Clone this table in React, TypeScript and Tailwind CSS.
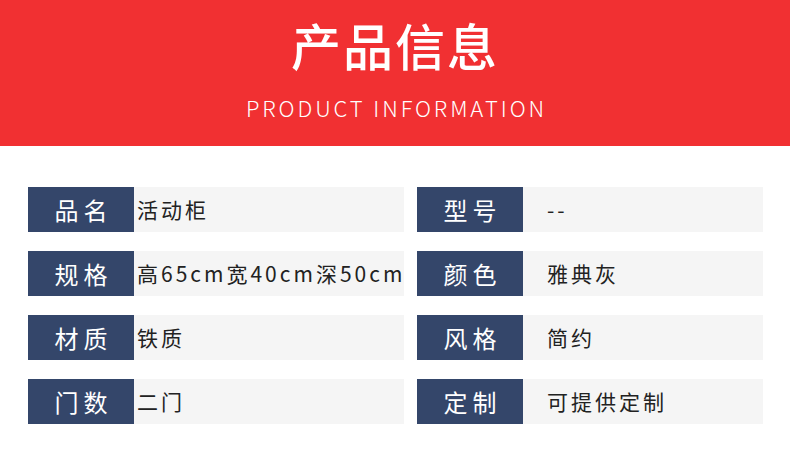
import React from "react";

const rows: [string, string, string, string][] = [
  ["品名", "活动柜", "型号", "--"],
  ["规格", "高65cm宽40cm深50cm", "颜色", "雅典灰"],
  ["材质", "铁质", "风格", "简约"],
  ["门数", "二门", "定制", "可提供定制"],
];

function Cell({ label, value, wide }: { label: string; value: string; wide: boolean }) {
  return (
    <div className={`flex h-[45px] ${wide ? "w-[376px]" : "w-[346px]"}`}>
      <div className="w-[106px] shrink-0 bg-[#34466a] flex items-center justify-center text-white text-[24px] tracking-[5px] pl-[5px]">
        {label}
      </div>
      <div
        className={`flex-1 bg-[#f5f5f5] flex items-center text-[#222] text-[21px] whitespace-nowrap overflow-hidden ${
          wide ? "pl-[3px] tracking-[3px]" : "pl-[24px] tracking-[3px]"
        }`}
      >
        {value}
      </div>
    </div>
  );
}

export default function App() {
  return (
    <div
      className="w-[790px] h-[454px] bg-white overflow-hidden"
      style={{ fontFamily: '"Noto Sans CJK SC", "Noto Sans", sans-serif' }}
    >
      <div className="h-[146px] bg-[#f13032] flex flex-col items-center">
        <div className="mt-[10px] text-white text-[50px] font-medium leading-[68px] tracking-[2px]">
          产品信息
        </div>
        <div className="mt-[14px] pl-[3px] text-white text-[22px] font-light leading-[30px] tracking-[2.9px]">
          PRODUCT INFORMATION
        </div>
      </div>
      <div className="pt-[41px] pl-[28px] flex flex-col gap-[19px]">
        {rows.map((r, i) => (
          <div key={i} className="flex gap-[13px]">
            <Cell label={r[0]} value={r[1]} wide />
            <Cell label={r[2]} value={r[3]} wide={false} />
          </div>
        ))}
      </div>
    </div>
  );
}
